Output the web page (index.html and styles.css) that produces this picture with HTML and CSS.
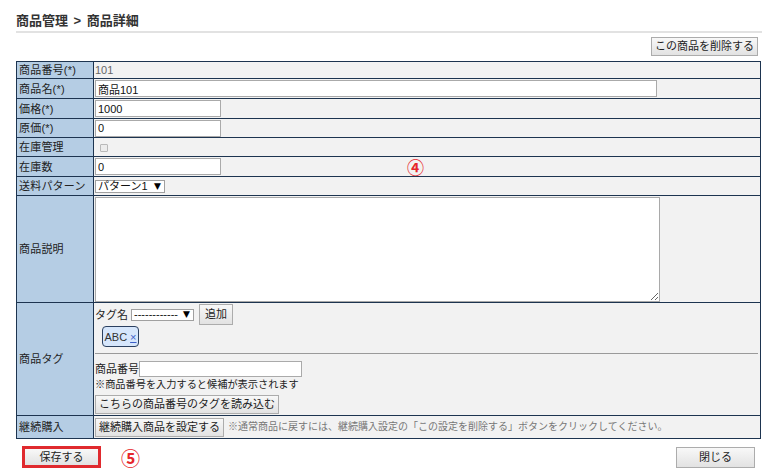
FILE: index.html
```html
<!DOCTYPE html>
<html lang="ja">
<head>
<meta charset="utf-8">
<title>商品詳細</title>
<link rel="stylesheet" href="styles.css">
</head>
<body>
<div class="page">
  <h1 class="title">商品管理 &gt; 商品詳細</h1>
  <div class="toolbar"><button class="btn btn-delete">この商品を削除する</button></div>
  <table class="form">
    <colgroup><col class="col-label"><col></colgroup>
    <tr class="row-id"><th>商品番号(*)</th><td class="static">101</td></tr>
    <tr class="row-input"><th>商品名(*)</th><td><input class="text text-long" value="商品101"></td></tr>
    <tr class="row-input"><th>価格(*)</th><td><input class="text text-short" value="1000"></td></tr>
    <tr class="row-mid"><th>原価(*)</th><td><input class="text text-short" value="0"></td></tr>
    <tr class="row-mid"><th>在庫管理</th><td><input type="checkbox" class="check" disabled></td></tr>
    <tr class="row-input"><th>在庫数</th><td><input class="text text-short" value="0"><span class="mark mark-4">④</span></td></tr>
    <tr class="row-mid"><th>送料パターン</th><td><span class="select select-pattern"><span>パターン1</span><span class="arrow">▼</span></span></td></tr>
    <tr class="row-desc"><th>商品説明</th><td><textarea class="desc"></textarea></td></tr>
    <tr class="row-tags"><th>商品タグ</th>
      <td class="tags">
        <div class="tag-add"><span>タグ名</span><span class="select select-tag"><span>------------</span><span class="arrow">▼</span></span><button class="btn btn-add">追加</button></div>
        <div class="tag-list"><span class="badge">ABC <a class="remove">×</a></span></div>
        <div class="tag-import">
          <div class="import-line"><span>商品番号</span><input class="text text-code"></div>
          <div class="note">※商品番号を入力すると候補が表示されます</div>
          <button class="btn btn-import">こちらの商品番号のタグを読み込む</button>
        </div>
      </td>
    </tr>
    <tr class="row-sub"><th>継続購入</th><td><button class="btn btn-sub">継続購入商品を設定する</button><span class="sub-note">※通常商品に戻すには、継続購入設定の「この設定を削除する」ボタンをクリックしてください。</span></td></tr>
  </table>
  <div class="footer">
    <div class="save-group"><button class="btn btn-save">保存する</button><span class="mark mark-5">⑤</span></div>
    <button class="btn btn-close">閉じる</button>
  </div>
</div>
</body>
</html>
```
FILE: styles.css
```css
* { box-sizing: border-box; }
html, body { margin: 0; background: #fff; }
body {
  font-family: "Liberation Sans", "Noto Sans CJK JP", sans-serif;
  font-size: 11px;
  line-height: 14px;
  color: #222;
}
.page { width: 762px; padding-left: 16px; }
.title {
  margin: 0;
  padding: 13px 0 2px;
  font-size: 13px;
  line-height: 16px;
  font-weight: bold;
  color: #333;
  border-bottom: 2px solid #e2e2e2;
  word-spacing: 2px;
}
.toolbar { display: flex; justify-content: flex-end; padding-right: 4px; margin: 4px 0 5px; }
.btn {
  font-family: inherit;
  font-size: 11px;
  color: #222;
  background: linear-gradient(#f8f8f8, #e2e2e2);
  border: 1px solid #acacac;
  border-radius: 0;
  padding: 0 2px;
  height: 19px;
  line-height: 17px;
  margin: 0;
  white-space: nowrap;
}
.btn-delete { width: 107px; }

.form { width: 745px; border-collapse: collapse; border: 1px solid #1d3450; }
.col-label { width: 77px; }
.form th, .form td { border: 1px solid #1d3450; padding: 0; }
.form th {
  background: #b5cde4;
  text-align: left;
  font-weight: normal;
  padding-left: 2px;
  vertical-align: middle;
  white-space: nowrap;
  color: #222;
  letter-spacing: 0.2px;
}
.form td { background: #f2f2f2; padding-left: 1px; vertical-align: middle; }
.row-id { height: 17px; }
.row-input { height: 20px; }
.row-mid { height: 19px; }
.row-desc { height: 107px; }
.row-tags { height: 113px; }
.row-sub { height: 23px; }
.static { color: #666; }

.text {
  font-family: inherit;
  font-size: 11px;
  height: 17px;
  border: 1px solid #aaa;
  background: #fff;
  padding: 0 2px;
  margin: 0;
  vertical-align: middle;
  color: #111;
}
.text-long { width: 562px; }
.text-short { width: 126px; }
.text-code { width: 163px; height: 16px; }

.check {
  appearance: none;
  width: 8px;
  height: 8px;
  margin: 0 0 0 5px;
  border: 1px solid #b9b9b9;
  border-radius: 1px;
  background: #ececec;
  vertical-align: middle;
}
.select {
  display: inline-flex;
  align-items: center;
  justify-content: space-between;
  height: 13px;
  border: 1px solid #a0a0a0;
  background: #fff;
  padding: 0 3px 0 2px;
  font-size: 11px;
  line-height: 11px;
  vertical-align: middle;
  color: #111;
}
.select-pattern { width: 70px; }
.select-tag { width: 63px; height: 12px; margin-left: 3px; }
.arrow { font-size: 9px; line-height: 9px; font-family: "DejaVu Sans", sans-serif; color: #000; }

.desc {
  display: block;
  width: 565px;
  height: 105px;
  border: 1px solid #a9a9a9;
  background: #fff;
  margin: 0;
  resize: both;
}

.form td.tags { vertical-align: top; padding-top: 1px; padding-right: 2px; }
.tag-add { display: flex; align-items: center; height: 21px; }
.btn-add { width: 34px; height: 21px; padding: 0; margin-left: 5px; }
.tag-list { padding-left: 7px; margin-top: 1px; height: 21px; }
.badge {
  display: inline-flex;
  align-items: center;
  justify-content: center;
  width: 37px;
  height: 21px;
  background: #d6e6fb;
  border: 1px solid #2b4060;
  border-radius: 4px;
  color: #333;
  gap: 3px;
}
.remove { color: #3c5fc8; text-decoration: underline; }
.tag-import { margin-top: 6px; border-top: 1px solid #9a9a9a; padding-top: 7px; }
.import-line { display: flex; align-items: center; height: 16px; }
.note { line-height: 16px; font-size: 10.2px; }
.btn-import { width: 184px; margin-top: 2px; }

.btn-sub { width: 129px; vertical-align: middle; }
.sub-note { font-size: 10px; color: #777; margin-left: 4px; vertical-align: middle; }

.mark {
  color: #e6262b;
  font-family: "Noto Sans CJK JP", sans-serif;
  font-weight: bold;
  line-height: 1;
  vertical-align: middle;
}
.mark-4 { font-size: 17px; margin-left: 186px; }
.mark-5 { font-size: 19px; margin-left: 20px; }

.footer {
  display: flex;
  justify-content: space-between;
  align-items: center;
  margin-top: 7px;
  padding-right: 7px;
}
.save-group { display: flex; align-items: center; margin-left: 6px; }
.btn-save { width: 79px; height: 22px; border: 3px solid #e02a2e; line-height: 16px; }
.btn-close { width: 79px; height: 21px; }
```
